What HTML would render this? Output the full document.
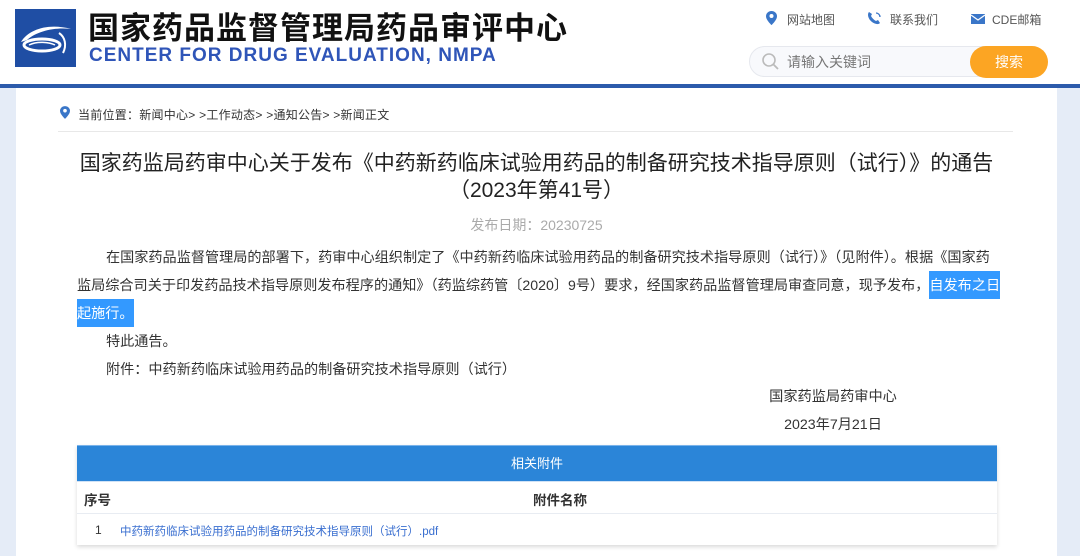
<!DOCTYPE html>
<html><head><meta charset="utf-8"><style>
*{margin:0;padding:0;box-sizing:border-box}
body{width:1080px;height:556px;overflow:hidden;background:#fff;font-family:"Liberation Sans","Noto Sans CJK SC",sans-serif;color:#333;position:relative}
.a{position:absolute;white-space:nowrap}
.hl{background:#3399ff;color:#fff;display:inline-block;line-height:28px}
</style></head><body>
<!-- header -->
<div class="a" style="left:15px;top:9px;width:61px;height:58px;background:#1f4ea4"></div>
<svg class="a" style="left:15px;top:9px" width="61" height="58" viewBox="0 0 61 58">
<path d="M6 33 C14 20 34 14 56 20 C40 18 22 22 12 31Z" fill="#fff"/>
<ellipse cx="27" cy="36" rx="18" ry="6" fill="none" stroke="#fff" stroke-width="3"/>
<path d="M14 36 C22 32 34 33 40 36" stroke="#fff" stroke-width="1.5" fill="none"/>
<path d="M44 24 C50 28 52 36 48 44" stroke="#fff" stroke-width="2" fill="none"/>
</svg>
<div class="a" style="left:88px;top:3px;font-size:31px;font-weight:bold;color:#111;letter-spacing:1px">国家药品监督管理局药品审评中心</div>
<div class="a" style="left:89px;top:45px;font-size:19px;font-weight:bold;color:#2f55b8;letter-spacing:1px">CENTER FOR DRUG EVALUATION, NMPA</div>
<svg class="a" style="left:766px;top:11px" width="11" height="14" viewBox="0 0 11 14"><path d="M5.5 0C2.5 0 0 2.3 0 5.2 0 9 5.5 14 5.5 14S11 9 11 5.2C11 2.3 8.5 0 5.5 0Z" fill="#3a76c8"/><circle cx="5.5" cy="5" r="2" fill="#fff"/></svg>
<div class="a" style="left:787px;top:11px;font-size:12px;color:#555">网站地图</div>
<svg class="a" style="left:867px;top:11px" width="15" height="14" viewBox="0 0 15 14"><path d="M2 1 C0 3 1 8 5 11 C8 13 11 14 13 12 L11 9 9 10 C7 9 5 7 4 5 L5 3Z" fill="#3a76c8"/><path d="M9 2 A4 4 0 0 1 13 6" stroke="#3a76c8" fill="none" stroke-width="1.3"/></svg>
<div class="a" style="left:890px;top:11px;font-size:12px;color:#555">联系我们</div>
<svg class="a" style="left:971px;top:14px" width="14" height="10" viewBox="0 0 14 10"><rect width="14" height="10" fill="#3a76c8"/><path d="M0 1 L7 6 L14 1" stroke="#fff" fill="none" stroke-width="1.2"/></svg>
<div class="a" style="left:992px;top:11px;font-size:12px;color:#555">CDE邮箱</div>
<div class="a" style="left:749px;top:46px;width:298px;height:31px;border:1px solid #e6e8ee;border-radius:16px;background:#f8f9fc"></div>
<svg class="a" style="left:761px;top:52px" width="19" height="19" viewBox="0 0 19 19"><circle cx="8" cy="8" r="6" stroke="#bbb" stroke-width="1.6" fill="none"/><path d="M12.5 12.5 L17 17" stroke="#bbb" stroke-width="1.8"/></svg>
<div class="a" style="left:787px;top:52px;font-size:14px;color:#777">请输入关键词</div>
<div class="a" style="left:970px;top:46px;width:78px;height:32px;border-radius:16px;background:#fca523;color:#fff;font-size:14px;text-align:center;line-height:32px">搜索</div>
<div class="a" style="left:0;top:84px;width:1080px;height:4px;background:#2c5bab"></div>
<div class="a" style="left:0;top:88px;width:16px;height:468px;background:#e5ecf7"></div>
<div class="a" style="left:1057px;top:88px;width:23px;height:468px;background:#e5ecf7"></div>
<!-- breadcrumb -->
<svg class="a" style="left:60px;top:106px" width="10" height="13" viewBox="0 0 11 14"><path d="M5.5 0C2.5 0 0 2.3 0 5.2 0 9 5.5 14 5.5 14S11 9 11 5.2C11 2.3 8.5 0 5.5 0Z" fill="#3a76c8"/><circle cx="5.5" cy="5" r="2" fill="#fff"/></svg>
<div class="a" style="left:78px;top:106px;font-size:12px;color:#333;letter-spacing:0.25px">当前位置：新闻中心&gt; &gt;工作动态&gt; &gt;通知公告&gt; &gt;新闻正文</div>
<div class="a" style="left:58px;top:131px;width:955px;height:1px;background:#e8e8e8"></div>
<!-- title -->
<div class="a" style="left:0;width:1073px;text-align:center;top:150px;font-size:21px;color:#222;line-height:27px">国家药监局药审中心关于发布《中药新药临床试验用药品的制备研究技术指导原则（试行）》的通告<br>（2023年第41号）</div>
<div class="a" style="left:0;width:1073px;text-align:center;top:215px;font-size:14px;color:#aaa">发布日期：20230725</div>
<!-- body -->
<div style="position:absolute;left:77px;top:243px;font-size:14.15px;line-height:28px;color:#333;white-space:nowrap">
<div style="padding-left:29px">在国家药品监督管理局的部署下，药审中心组织制定了《中药新药临床试验用药品的制备研究技术指导原则（试行）》（见附件）。根据《国家药</div>
<div>监局综合司关于印发药品技术指导原则发布程序的通知》（药监综药管〔2020〕9号）要求，经国家药品监督管理局审查同意，现予发布，<span class="hl">自发布之日</span></div>
<div><span class="hl">起施行。</span></div>
<div style="padding-left:29px">特此通告。</div>
<div style="padding-left:29px">附件：中药新药临床试验用药品的制备研究技术指导原则（试行）</div>
</div>
<div class="a" style="left:733px;width:200px;text-align:center;top:386px;font-size:14.2px;color:#333">国家药监局药审中心</div>
<div class="a" style="left:733px;width:200px;text-align:center;top:414px;font-size:14.2px;color:#333">2023年7月21日</div>
<!-- table -->
<div class="a" style="left:77px;top:445px;width:920px;height:100px;box-shadow:0 2px 4px rgba(0,0,0,0.15)"></div>
<div class="a" style="left:77px;top:445px;width:920px;height:36px;background:#2b85d8;border-top:1px solid #7ab3ea;color:#fff;font-size:13px;text-align:center;line-height:35px">相关附件</div>
<div class="a" style="left:77px;top:481px;width:920px;height:33px;background:#fff;border-bottom:1px solid #e8ecf2;border-top:1px solid #cfe2f6"></div>
<div class="a" style="left:84px;top:489px;font-size:13.5px;font-weight:bold;color:#333">序号</div>
<div class="a" style="left:533px;top:489px;font-size:13.5px;font-weight:bold;color:#333">附件名称</div>
<div class="a" style="left:95px;top:523px;font-size:12px;color:#333">1</div>
<div class="a" style="left:120px;top:523px;font-size:11.5px;color:#3a6fd0">中药新药临床试验用药品的制备研究技术指导原则（试行）.pdf</div>
</body></html>
